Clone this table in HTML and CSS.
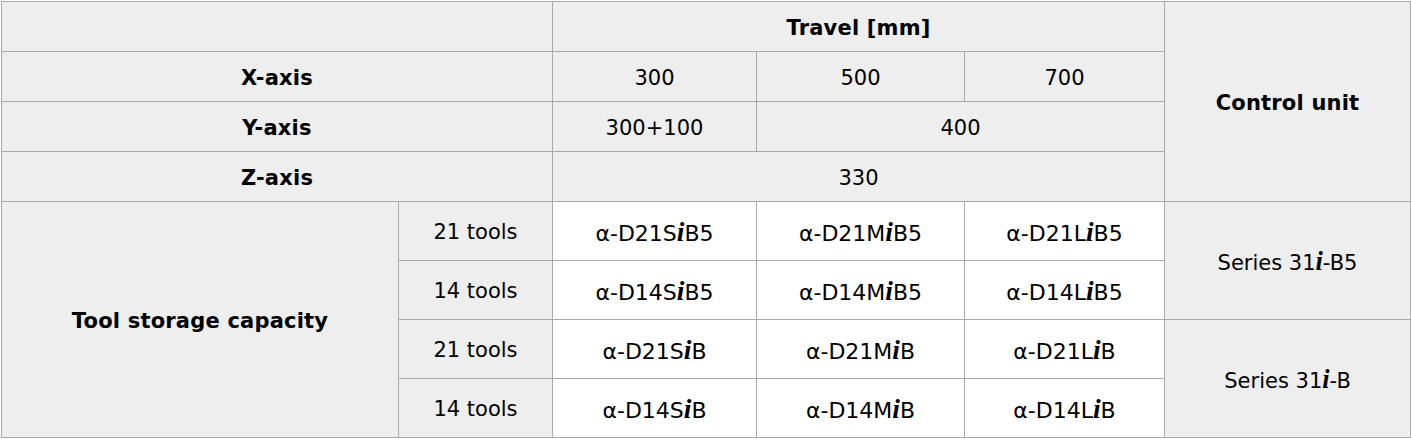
FILE: index.html
```html
<!DOCTYPE html>
<html>
<head>
<meta charset="utf-8">
<link rel="stylesheet" href="styles.css">
</head>
<body>
<table class="spec">
<colgroup>
<col class="c1"><col class="c2"><col class="c3"><col class="c4"><col class="c5"><col class="c6">
</colgroup>
<tr class="r-head">
<th colspan="2"></th>
<th colspan="3">Travel [mm]</th>
<th rowspan="4">Control unit</th>
</tr>
<tr class="r-head">
<th colspan="2">X-axis</th>
<td>300</td><td>500</td><td>700</td>
</tr>
<tr class="r-head">
<th colspan="2">Y-axis</th>
<td>300+100</td><td colspan="2">400</td>
</tr>
<tr class="r-head">
<th colspan="2">Z-axis</th>
<td colspan="3">330</td>
</tr>
<tr class="r-tool">
<th rowspan="4">Tool storage capacity</th>
<td>21 tools</td>
<td class="model">α-D21S<i>i</i>B5</td>
<td class="model">α-D21M<i>i</i>B5</td>
<td class="model">α-D21L<i>i</i>B5</td>
<td rowspan="2">Series 31<i>i</i>-B5</td>
</tr>
<tr class="r-tool">
<td>14 tools</td>
<td class="model">α-D14S<i>i</i>B5</td>
<td class="model">α-D14M<i>i</i>B5</td>
<td class="model">α-D14L<i>i</i>B5</td>
</tr>
<tr class="r-tool">
<td>21 tools</td>
<td class="model">α-D21S<i>i</i>B</td>
<td class="model">α-D21M<i>i</i>B</td>
<td class="model">α-D21L<i>i</i>B</td>
<td rowspan="2">Series 31<i>i</i>-B</td>
</tr>
<tr class="r-tool">
<td>14 tools</td>
<td class="model">α-D14S<i>i</i>B</td>
<td class="model">α-D14M<i>i</i>B</td>
<td class="model">α-D14L<i>i</i>B</td>
</tr>
</table>
</body>
</html>
```
FILE: styles.css
```css
html, body {
  margin: 0;
  padding: 0;
  background: #fff;
}
body {
  padding: 1px 0 0 1px;
  font-family: "DejaVu Sans", Verdana, sans-serif;
  font-size: 21px;
  color: #000;
}
.spec {
  border-collapse: collapse;
  table-layout: fixed;
  width: 1409px;
}
.c1 { width: 397px; }
.c2 { width: 154px; }
.c3 { width: 204px; }
.c4 { width: 208px; }
.c5 { width: 200px; }
.c6 { width: 246px; }
.spec th, .spec td {
  border: 1px solid #aaa;
  background: #eee;
  text-align: center;
  vertical-align: middle;
  padding: 4px 0 0;
  font-weight: normal;
  line-height: 1.2;
}
.spec th {
  font-weight: bold;
  letter-spacing: 0.2px;
}
.r-head { height: 50px; }
.r-tool { height: 59px; }
.spec td.model {
  background: #fff;
  font-size: 22px;
}
.spec i {
  font-family: "Liberation Serif", "Times New Roman", serif;
  font-style: italic;
  font-weight: bold;
  font-size: 1.25em;
  line-height: 1;
}
```
